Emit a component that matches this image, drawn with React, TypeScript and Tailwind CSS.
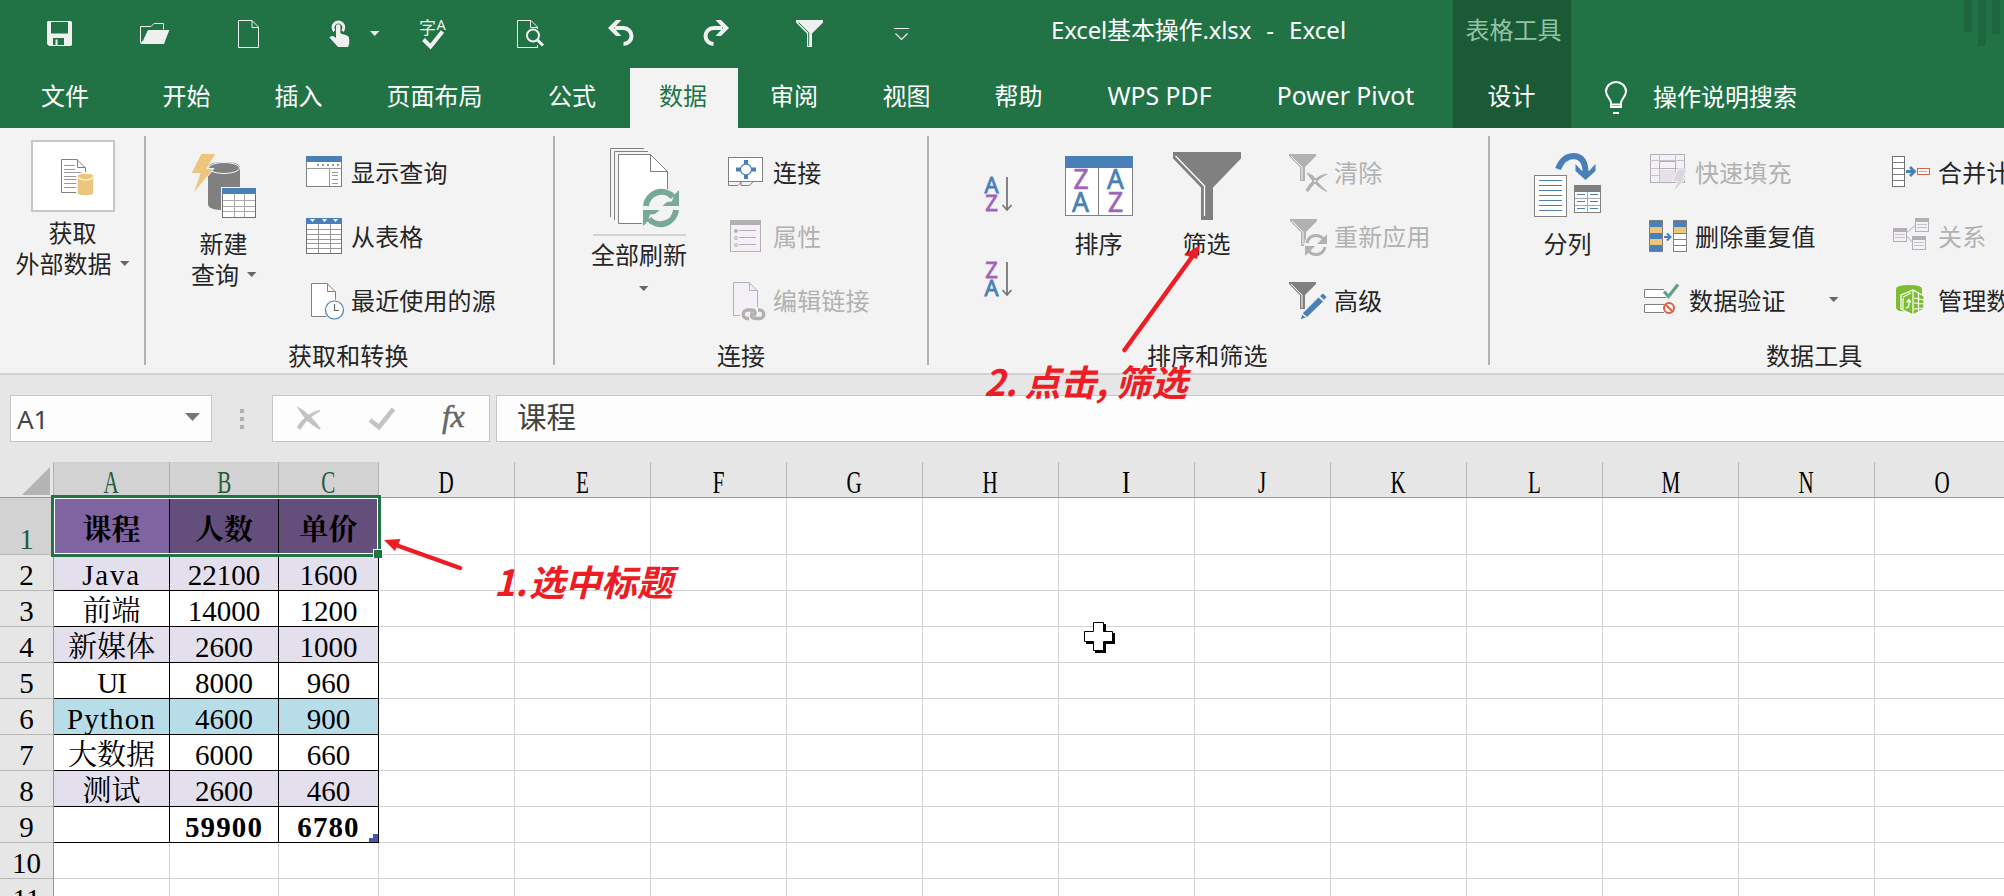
import type { ReactNode } from "react";

const G = "#808080";
const B = "#4a80b8";
const P = "#a064b8";
const DIM = "#b3b0b3";
const RED = "#ee1c25";

/* Icon whose viewBox is expressed in window coordinates. */
function Ic({ x, y, w, h, children }: { x: number; y: number; w: number; h: number; children: ReactNode }) {
  return (
    <svg width={w} height={h} viewBox={`${x} ${y} ${w} ${h}`} fill="none" className="block shrink-0 overflow-visible">
      {children}
    </svg>
  );
}

function Caret({ className = "" }: { className?: string }) {
  return (
    <svg width="10" height="5" viewBox="0 0 10 5" className={`block shrink-0 ${className}`}>
      <path d="M0 0H9.4L4.7 5Z" fill="#666" />
    </svg>
  );
}

/* ---------- title bar ---------- */

const quick: { x: number; w: number; art: ReactNode }[] = [
  {
    x: 0, w: 106,
    art: <path fillRule="evenodd" fill="#f0f0f0" d="M48 21H71L72 22V45L71 46H49L47 44V22ZM51 22V33.5H68V22ZM53 38V45H55.500V39.500H57.500V45H64V38Z" />,
  },
  {
    x: 106, w: 94,
    art: (
      <>
        <path d="M140.500 43V26.500H151L154 23.500H163.500V29.500" stroke="#f0f0f0" />
        <path d="M148 30H169.300L164 44H140.500Z" fill="#f0f0f0" />
        <path d="M142.500 41L147 30" stroke="#217346" />
      </>
    ),
  },
  {
    x: 200, w: 94,
    art: <path d="M238.500 20.500H252L258.500 27V47.500H238.500ZM252 20.500V27.500H258.500" stroke="#f0f0f0" />,
  },
  {
    x: 294, w: 106,
    art: (
      <>
        <path d="M334.500 32A5.300 5.300 0 1 1 342.300 32" stroke="#f0f0f0" strokeWidth="3" transform="translate(0 -1)" />
        <path d="M336 41V26.500a2.300 2.300 0 0 1 4.600 0V33.500L347 35.500Q349.500 36.500 349.200 39V44L348 47H338L329.500 37.500Q331 35 334 36.500L336 38Z" fill="#f0f0f0" />
        <path d="M335.500 37V26M341 33V26" stroke="#217346" strokeWidth=".8" />
        <path d="M370 31H379.500L374.700 36Z" fill="#f0f0f0" />
      </>
    ),
  },
  {
    x: 400, w: 80,
    art: (
      <>
        <text x="419" y="33.500" fontSize="17" fill="#f0f0f0" fontFamily="Noto Sans CJK SC, sans-serif">字</text>
        <text x="436.500" y="30" fontSize="14.500" fill="#f0f0f0" fontFamily="Noto Sans, sans-serif">A</text>
        <path d="M423.500 39.500L430.500 46.500L442.500 31.500" stroke="#f0f0f0" strokeWidth="4" />
      </>
    ),
  },
  {
    x: 480, w: 96,
    art: (
      <>
        <path d="M537.500 29V27L531 20.500H517.500V47.500H537.500V45M530.500 20.500V27.500H537.500" stroke="#f0f0f0" />
        <circle cx="533" cy="35.500" r="6" stroke="#f0f0f0" strokeWidth="2" fill="#217346" />
        <path d="M537.500 40L543 45.500" stroke="#f0f0f0" strokeWidth="3" />
      </>
    ),
  },
  {
    x: 576, w: 92,
    art: (
      <>
        <path d="M615 28H623.500A8 8 0 0 1 623.500 44" stroke="#f0f0f0" strokeWidth="4" />
        <path d="M608 28L616 20H621.500L614 28L621.500 36H616Z" fill="#f0f0f0" />
      </>
    ),
  },
  {
    x: 668, w: 95,
    art: (
      <>
        <path d="M722 28H713.500A8 8 0 0 0 713.500 44" stroke="#f0f0f0" strokeWidth="4" />
        <path d="M729 28L721 20H715.500L723 28L715.500 36H721Z" fill="#f0f0f0" />
      </>
    ),
  },
  {
    x: 763, w: 93,
    art: (
      <>
        <path d="M796 20H823V22.500L812 33.500V47H807V33.500L796 22.500Z" fill="#f0f0f0" />
        <path d="M798.500 22.500L808.700 32.500V46" stroke="#217346" />
      </>
    ),
  },
  {
    x: 856, w: 104,
    art: <path d="M894 28.500H909M895.500 33.500L901.500 39.500L907.500 33.500" stroke="#f0f0f0" strokeWidth="1.200" />,
  },
];

function Header() {
  const tab = "flex h-[60px] items-center justify-center pr-px pb-1 text-2xl text-white";
  return (
    <header className="flex h-32 bg-[#217346]">
      <div className="flex w-[1453px] shrink-0 flex-col">
        <div className="flex h-[68px]">
          {quick.map((q) => (
            <Ic key={q.x} x={q.x} y={0} w={q.w} h={68}>{q.art}</Ic>
          ))}
          <div className="ml-[91px] flex gap-[15px] pt-[14px] text-2xl leading-8 whitespace-pre text-white">
            <span className="tracking-[-0.15px]">Excel基本操作.xlsx</span>
            <span>-</span>
            <span className="tracking-[0.1px]">Excel</span>
          </div>
        </div>
        <nav className="flex">
          <div className={`${tab} w-[131px]`}>文件</div>
          <div className={`${tab} w-28`}>开始</div>
          <div className={`${tab} w-28`}>插入</div>
          <div className={`${tab} w-40`}>页面布局</div>
          <div className={`${tab} w-[115px]`}>公式</div>
          <div className="flex h-[60px] w-[108px] items-center justify-center bg-[#f3f3f3] pr-0.5 pb-1 text-2xl text-[#217346]">数据</div>
          <div className={`${tab} w-[113px]`}>审阅</div>
          <div className={`${tab} w-28`}>视图</div>
          <div className={`${tab} w-28`}>帮助</div>
          <div className={`${tab} w-[170px]`}><span className="text-[24.8px]">WPS PDF</span></div>
          <div className={`${tab} w-[202px]`}><span className="text-[24.8px]">Power Pivot</span></div>
        </nav>
      </div>
      <div className="flex w-[118px] shrink-0 flex-col items-center bg-[#1b5a37]">
        <div className="h-[68px] pt-[14px] pl-[3px] text-2xl leading-8 text-[#90c4a4]">表格工具</div>
        <div className={tab}>设计</div>
      </div>
      <div className="flex flex-1 flex-col overflow-hidden">
        <div className="flex h-[68px] justify-end gap-1.5 pr-1">
          <div className="h-8 w-2 bg-[#1f6640]" />
          <div className="h-[46px] w-2 bg-[#1f6640]" />
          <div className="h-[34px] w-2 bg-[#1f6640]" />
        </div>
        <div className="flex h-[60px] items-center text-2xl text-white">
          <Ic x={1571} y={68} w={82} h={60}>
            <path d="M1611 107V102.500C1611 99 1606 97 1606 91.500A10 9.500 0 0 1 1626 91.500C1626 97 1621 99 1621 102.500V107ZM1611 104.500H1621M1613 113H1619" stroke="#fff" strokeWidth="2" />
          </Ic>
          <span className="pb-0.5">操作说明搜索</span>
        </div>
      </div>
    </header>
  );
}

/* ---------- ribbon art ---------- */

const Funnel = ({ x, y, c, inner }: { x: number; y: number; c: string; inner: string }) => (
  <g transform={`translate(${x} ${y})`}>
    <path d="M0 0H27V2L16 13V27H11V13L0 2Z" fill={c} />
    <path d="M2 2L13 13V26" stroke={inner} />
  </g>
);

const grid = (x: number, y: number, w: number, h: number, cols: number, rows: number, c: string) => (
  <path
    stroke={c}
    d={
      Array.from({ length: cols - 1 }, (_, i) => `M${Math.round(x + ((i + 1) * w) / cols) + 0.5} ${y}v${h}`).join("") +
      Array.from({ length: rows - 1 }, (_, i) => `M${x} ${Math.round(y + ((i + 1) * h) / rows) + 0.5}h${w}`).join("")
    }
  />
);

const art = {
  external: (
    <>
      <path d="M61.500 159.500H77L85.500 168V192.500H61.500Z" fill="#fff" stroke={G} />
      <path d="M77.500 159.500V167.500H85.500" stroke={G} />
      <path d="M64 165.500H75M64 169.500H75M64 172.500H82M64 176.500H80M64 179.500H77M64 183.500H77M64 187.500H77" stroke="#999" />
      <path d="M77 176V193Q77 196 85.500 196T94 193V176Q94 173 85.500 173T77 176Z" fill="#edc57c" stroke="#fff" strokeWidth="1.500" />
      <path d="M78 177Q80 180 85.500 180T93 177" stroke="#fff" strokeWidth="1.200" />
    </>
  ),
  newQuery: (
    <>
      <path d="M208 168V204Q208 210 224 210T240 204V168Q240 162 224 162T208 168Z" fill={G} />
      <ellipse cx="224" cy="168" rx="15.500" ry="5.500" stroke="#f3f3f3" />
      <path d="M201 153.500H216L207 168.500H214L193 194L200 173.500H191Z" fill="#edc57c" stroke="#f3f3f3" />
      <rect x="221" y="187" width="36" height="32" fill="#f3f3f3" />
      <rect x="222.500" y="188.500" width="33" height="29" fill="#fff" stroke="#707070" />
      <path d="M222 188H256V194H222Z" fill={B} />
      {grid(223, 194, 32, 23, 3, 4, "#a8a8a8")}
    </>
  ),
  showQuery: (
    <>
      <rect x="306.500" y="156.500" width="35" height="30" fill="#fff" stroke={G} />
      <path d="M306 156H342V162H306Z" fill={B} />
      <path d="M307 168.500H341M329.500 169V186M332 172.500H338M332 175.500H338M332 179.500H338M332 183.500H338" stroke="#999" />
      <path d="M317 165H340" stroke="#999" strokeWidth="2" strokeDasharray="2 3" />
    </>
  ),
  fromTable: (
    <>
      <rect x="306.500" y="218.500" width="35" height="35" fill="#fff" stroke="#707070" />
      <path d="M306 218H342V224H306Z" fill={B} />
      <path d="M310 219H315L312.500 222ZM322 219H327L324.500 222ZM333 219H338L335.500 222Z" fill="#fff" />
      {grid(307, 224, 34, 29, 3, 6, "#999")}
    </>
  ),
  recent: (
    <>
      <path d="M311.500 283.500H327L335.500 292V316.500H311.500Z" fill="#fff" stroke={G} />
      <path d="M327.500 283.500V291.500H335.500" stroke={G} />
      <circle cx="334.500" cy="310" r="10.500" fill="#f3f3f3" />
      <circle cx="334.500" cy="310" r="9" fill="#fff" stroke={B} strokeWidth="1.200" />
      <path d="M334.500 304V310.500H339" stroke="#666" strokeWidth="1.200" />
    </>
  ),
  refresh: (
    <>
      <path d="M610.500 217V148.500H644M614.500 220V151.500H648" stroke={G} />
      <path d="M618.500 154.500H650.500L667.500 171.500V223.500H618.500Z" fill="#fff" stroke={G} />
      <path d="M650.500 154.500V171.500H667.500" stroke={G} />
      <path d="M642 226V206Q646 189 661 189H669V226Z" fill="#f3f3f3" />
      <path d="M646 206A15.500 15.500 0 0 1 673 197M676 210A15.500 15.500 0 0 1 649 219" stroke="#78a898" strokeWidth="6" />
      <path d="M679 190V206H662.500L667 202L672 201.500L674 195ZM643 226V210H659.500L655 214L650 214.500L648 221Z" fill="#78a898" />
    </>
  ),
  connection: (
    <>
      <rect x="728.500" y="157.500" width="34" height="24" fill="#fff" stroke={G} />
      <path d="M728.500 182V185.500H738L741.500 182M741 182V185.500H749L753 182" stroke={G} />
      <circle cx="746" cy="169.500" r="5.500" stroke={B} strokeWidth="1.300" />
      <path d="M744 160h4v4h-4zM744 175h4v4h-4zM736 167.500h4v4h-4zM752 167.500h4v4h-4z" fill={B} />
    </>
  ),
  props: (
    <>
      <rect x="730.500" y="220.500" width="30" height="31" fill="#f5f0f7" stroke={DIM} />
      <path d="M730 220H761V225H730Z" fill={DIM} />
      <circle cx="736" cy="231" r="2" fill={DIM} />
      <circle cx="736" cy="238" r="1.500" stroke={DIM} />
      <circle cx="736" cy="245" r="1.500" stroke={DIM} />
      <path d="M739 230.500H756M739 237.500H756M739 244.500H756" stroke={DIM} />
    </>
  ),
  editLink: (
    <>
      <path d="M733.500 282.500H749L757.500 291V315.500H733.500Z" fill="#f5f0f7" stroke={DIM} />
      <path d="M749.500 282.500V290.500H757.500" stroke={DIM} />
      <path d="M740 307H767V320H740Z" fill="#f3f3f3" />
      <path d="M754 316Q757 310 751 310H747.500A4.200 4.200 0 0 0 747.500 318.500H749M752.500 312.500Q749.500 318.500 756 318.500H759.500A4.200 4.200 0 0 0 759.500 310H758" stroke={DIM} strokeWidth="3.400" />
    </>
  ),
  sortIcon: (
    <>
      <rect x="1065.500" y="156.500" width="67" height="59" fill="#fff" stroke={G} />
      <path d="M1065 156H1133V168H1065Z" fill={B} />
      <path d="M1098.500 168V215" stroke={G} />
      <g fontSize="26.500" fontFamily="Noto Sans, sans-serif" textAnchor="middle" strokeWidth=".7">
        <text x="1081" y="189" fill={P} stroke={P}>Z</text>
        <text x="1115.500" y="189" fill={B} stroke={B}>A</text>
        <text x="1080.500" y="212" fill={B} stroke={B}>A</text>
        <text x="1115.500" y="212" fill={P} stroke={P}>Z</text>
      </g>
    </>
  ),
  filter: (
    <>
      <path d="M1173 152H1241V158.500L1213 187.500V220H1201V187.500L1173 158.500Z" fill={G} />
      <path d="M1175.500 156L1204.500 186V216" stroke="#fff" strokeWidth="1.300" />
    </>
  ),
  clear: (
    <>
      <Funnel x={1289} y={154} c={DIM} inner="#f5f0f7" />
      <path d="M1307 173L1313 176Q1318 184 1327 191.500Q1316 187 1307 173ZM1327 174Q1314 176 1306 190L1308 191.500Q1315 180 1327 174Z" fill={DIM} stroke={DIM} />
    </>
  ),
  reapply: (
    <>
      <Funnel x={1290} y={219} c={DIM} inner="#f5f0f7" />
      <path d="M1304 246Q1305 233 1316 233V246Z" fill="#f3f3f3" />
      <path d="M1307 243A9.300 9.300 0 0 1 1323 238.500M1325 247A9.300 9.300 0 0 1 1309 251.500" stroke={DIM} strokeWidth="3" />
      <path d="M1327 234V244H1317ZM1305 256V246H1315Z" fill={DIM} />
    </>
  ),
  advanced: (
    <>
      <Funnel x={1289} y={282} c={G} inner="#fff" />
      <path d="M1300 320L1302.500 313L1318.500 297L1323.500 301.500L1307 317.500Z" fill={B} stroke="#f3f3f3" />
      <path d="M1320 296L1323 293.500L1326.500 297L1324 300Z" fill={B} />
      <path d="M1302 313.500L1306.500 317.500" stroke="#f3f3f3" strokeWidth="1.500" />
    </>
  ),
  split: (
    <>
      <path d="M1558 169Q1563 156 1574 156Q1586 157 1585.500 174" stroke={B} strokeWidth="6" />
      <path d="M1575.500 164L1582 171H1589L1595.500 164V171L1585.500 180L1575.500 171Z" fill={B} />
      <rect x="1534.500" y="175.500" width="32" height="41" fill="#fff" stroke={G} />
      <path d="M1539 180.500H1562M1539 185.500H1562M1539 190.500H1562M1539 195.500H1562M1539 200.500H1562M1539 205.500H1562M1539 210.500H1562" stroke={B} />
      <rect x="1574.500" y="185.500" width="26" height="27" fill="#fff" stroke={G} />
      <path d="M1574 185H1601V192H1574Z" fill={G} />
      <path d="M1575 198.500H1600M1575 205.500H1600M1587.500 192V212" stroke="#aaa" />
      <path d="M1577 194.500H1585M1590 194.500H1598M1577 201.500H1585M1590 201.500H1598M1577 208.500H1585M1590 208.500H1598" stroke={B} />
    </>
  ),
  flash: (
    <>
      <rect x="1650.500" y="154.500" width="34" height="28" fill="#f5f0f7" stroke={DIM} />
      <path d="M1659.500 154V182M1675.500 154V182M1650 160.500H1684M1650 168.500H1684M1650 175.500H1684" stroke="#c6c2c8" />
      <rect x="1660" y="170" width="15" height="12" fill="#e6e0e8" />
      <rect x="1659.500" y="161.500" width="16" height="7" fill="#f5f0f7" stroke={DIM} />
      <path d="M1678 169H1687L1683 178H1686L1673.500 192L1677 181.500H1672Z" fill="#dcd6de" stroke="#f3f3f3" />
    </>
  ),
  dedupe: (
    <>
      <rect x="1649.500" y="220.500" width="13" height="31" fill={B} stroke={G} />
      <path d="M1650 227h12v6h-12zM1650 239h12v6h-12z" fill="#edc57c" />
      <rect x="1673.500" y="220.500" width="13" height="31" fill="#fff" stroke={G} />
      <path d="M1674 221h12v6h-12z" fill={B} />
      <path d="M1674 227h12v6h-12z" fill="#edc57c" />
      <path d="M1674 233.500h12M1674 239.500h12M1674 245.500h12" stroke={G} />
      <path d="M1664 237H1670M1667 233.500L1670.500 237L1667 240.500" stroke={B} strokeWidth="2" />
    </>
  ),
  validate: (
    <>
      <path d="M1664 289.500H1644.500V297.500H1666" fill="#fff" stroke={G} />
      <path d="M1664 304.500H1644.500V312.500H1664" fill="#fff" stroke={G} />
      <path d="M1664 291.500L1668.500 296.500L1678 284.500" stroke="#64a08c" strokeWidth="3.300" />
      <circle cx="1669" cy="308" r="5" fill="#f3f3f3" stroke="#d8624a" strokeWidth="2" />
      <path d="M1665.500 304.500L1672.500 311.500" stroke="#d8624a" strokeWidth="2" />
    </>
  ),
  consolidate: (
    <>
      <rect x="1892.500" y="156.500" width="12" height="30" fill="#fff" stroke="#707070" />
      <path d="M1893 162.500h11M1893 168.500h11M1893 174.500h11M1893 180.500h11" stroke={G} />
      <path d="M1906 171.500H1913M1910 167L1914.500 171.500L1910 176" stroke={B} strokeWidth="2.800" />
      <rect x="1917.500" y="168.500" width="12" height="6" fill="#fff" stroke="#d8624a" />
      <path d="M1919 171.500h8" stroke="#aaa" />
    </>
  ),
  relation: (
    <>
      <path d="M1906 233L1916 225M1906 235L1913 243" stroke={DIM} />
      {[[1893, 228], [1915, 218], [1912, 236]].map(([x, y]) => (
        <g key={x}>
          <rect x={x + 0.5} y={y + 0.5} width="13" height="13" fill="#f5f0f7" stroke={DIM} />
          <path d={`M${x} ${y}h14v4h-14z`} fill={DIM} />
          <path d={`M${x + 2} ${y + 6.5}h10M${x + 2} ${y + 9.5}h10`} stroke="#c6c2c8" />
        </g>
      ))}
    </>
  ),
  model: (
    <>
      <path d="M1896 289Q1896 285 1909 285T1922 289V304L1914 312L1900 311Q1896 310 1896 307Z" fill="#7ebc33" />
      <path d="M1901 295L1913 290L1924 296V309L1913 315L1901 309Z" fill="#7ebc33" stroke="#fff" strokeWidth="1.200" />
      <path d="M1913 290V315M1903 298V309M1903 297L1911 293M1914 298L1924 300M1914 303L1924 304M1914 309L1924 308M1918.500 293V312" stroke="#fff" strokeWidth="1.200" />
      <path d="M1905.500 308Q1909 308 1909 304V300M1906.500 302.500L1909 299.500L1911 302.500" stroke="#fff" strokeWidth="1.200" />
    </>
  ),
};

/* ---------- ribbon ---------- */

function Row({ x, n, w, label, dim, children }: { x: number; n: number; w: number; label: string; dim?: boolean; children: ReactNode }) {
  return (
    <div className="flex h-16 items-center whitespace-nowrap">
      <Ic x={x} y={141 + n * 64} w={w} h={64}>{children}</Ic>
      <span className={dim ? "pb-px tracking-[0.15px] text-[#b1b1b1]" : "pb-px tracking-[0.15px] text-[#262626]"}>{label}</span>
    </div>
  );
}

function Label({ children, className }: { children: string; className: string }) {
  return <div className={`flex h-9 items-center pt-px tracking-[0.1px] ${className}`}>{children}</div>;
}

const group = "flex h-[245px] shrink-0 flex-col";
const Sep = () => <div className="mt-2 h-[229px] w-0.5 shrink-0 bg-[#b1b1b1]" />;

function SortLetters({ y, first, second }: { y: number; first: string; second: string }) {
  return (
    <Ic x={980} y={y} w={40} h={85}>
      <g fontSize="22" fontFamily="Noto Sans, sans-serif" textAnchor="middle" strokeWidth=".8">
        <text x="991.500" y={y + 52} fill={first === "A" ? B : P} stroke={first === "A" ? B : P}>{first}</text>
        <text x="991.500" y={y + 70} fill={first === "A" ? P : B} stroke={first === "A" ? P : B}>{second}</text>
      </g>
      <path d={`M1007 ${y + 36}V${y + 69}M1002.500 ${y + 64}L1007 ${y + 69}L1011.500 ${y + 64}`} stroke="#777" strokeWidth="1.800" />
    </Ic>
  );
}

function Ribbon() {
  return (
    <section className="flex h-[247px] overflow-hidden border-b-2 border-[#d2d2d2] bg-[#f3f3f3] text-2xl text-[#262626]">
      <div className={`${group} w-36 items-center pt-3`}>
        <div className="ml-0.5 flex h-[72px] w-[84px] items-center justify-center border-2 border-[#c6c6c6] bg-white">
          <Ic x={33} y={142} w={80} h={68}>{art.external}</Ic>
        </div>
        <div className="mt-[5px] pl-px leading-[31px]">获取</div>
        <div className="flex items-center gap-2 pr-0 pl-[1px] leading-[31px] whitespace-nowrap">外部数据<Caret /></div>
      </div>
      <Sep />
      <div className={`${group} w-[407px]`}>
        <div className="flex h-[209px]">
          <div className="flex w-[156px] flex-col items-center">
            <Ic x={146} y={128} w={156} h={100}>{art.newQuery}</Ic>
            <div className="pr-px leading-[31px]">新建</div>
            <div className="flex items-center gap-2 leading-[31px]">查询<Caret /></div>
          </div>
          <div className="pt-[13px]">
            <Row x={302} n={0} w={49} label="显示查询">{art.showQuery}</Row>
            <Row x={302} n={1} w={49} label="从表格">{art.fromTable}</Row>
            <Row x={302} n={2} w={49} label="最近使用的源">{art.recent}</Row>
          </div>
        </div>
        <Label className="pl-[142px]">获取和转换</Label>
      </div>
      <Sep />
      <div className={`${group} w-[372px]`}>
        <div className="flex h-[209px]">
          <div className="flex w-[169px] flex-col items-center">
            <Ic x={555} y={128} w={169} h={106}>{art.refresh}</Ic>
            <div className="h-0.5 w-[93px] bg-[#d2d2d2]" />
            <div className="mt-[3px] pr-px leading-[31px]">全部刷新</div>
            <Caret className="mt-4 ml-2" />
          </div>
          <div className="pt-[13px]">
            <Row x={724} n={0} w={49} label="连接">{art.connection}</Row>
            <Row x={724} n={1} w={49} label="属性" dim>{art.props}</Row>
            <Row x={724} n={2} w={49} label="编辑链接" dim>{art.editLink}</Row>
          </div>
        </div>
        <Label className="pl-[162px]">连接</Label>
      </div>
      <Sep />
      <div className={`${group} w-[559px]`}>
        <div className="flex h-[209px]">
          <div className="flex w-[116px] flex-col pt-[13px] pl-[51px]">
            <SortLetters y={141} first="A" second="Z" />
            <SortLetters y={226} first="Z" second="A" />
          </div>
          <div className="flex w-[108px] flex-col items-center">
            <Ic x={1045} y={128} w={108} h={100}>{art.sortIcon}</Ic>
            <div className="pr-px leading-[31px]">排序</div>
          </div>
          <div className="flex w-[108px] flex-col items-center">
            <Ic x={1153} y={128} w={108} h={100}>{art.filter}</Ic>
            <div className="pr-px leading-[31px]">筛选</div>
          </div>
          <div className="pt-[13px] pl-6">
            <Row x={1285} n={0} w={49} label="清除" dim>{art.clear}</Row>
            <Row x={1285} n={1} w={49} label="重新应用" dim>{art.reapply}</Row>
            <Row x={1285} n={2} w={49} label="高级">{art.advanced}</Row>
          </div>
        </div>
        <Label className="pl-[218px]">排序和筛选</Label>
      </div>
      <Sep />
      <div className={`${group} w-[620px]`}>
        <div className="flex h-[209px]">
          <div className="flex w-[154px] flex-col items-center">
            <Ic x={1490} y={128} w={154} h={100}>{art.split}</Ic>
            <div className="pl-px leading-[31px]">分列</div>
          </div>
          <div className="w-[244px] pt-[13px]">
            <Row x={1644} n={0} w={51} label="快速填充" dim>{art.flash}</Row>
            <Row x={1644} n={1} w={51} label="删除重复值">{art.dedupe}</Row>
            <div className="flex items-center">
              <Row x={1644} n={2} w={45} label="数据验证">{art.validate}</Row>
              <Caret className="mb-[3px] ml-[43px]" />
            </div>
          </div>
          <div className="pt-[13px]">
            <Row x={1888} n={0} w={50} label="合并计算">{art.consolidate}</Row>
            <Row x={1888} n={1} w={50} label="关系" dim>{art.relation}</Row>
            <Row x={1888} n={2} w={50} label="管理数据模型">{art.model}</Row>
          </div>
        </div>
        <Label className="pl-[276px]">数据工具</Label>
      </div>
    </section>
  );
}

/* ---------- formula bar ---------- */

function FormulaBar() {
  return (
    <section className="flex h-[87px] bg-[#e6e6e6] pt-5 pl-2.5">
      <div className="flex h-[47px] w-[202px] items-center justify-between border border-[#c6c6c6] bg-[#fdfdfd] pr-[11px] pl-1.5 text-2xl text-[#444]">
        <span className="text-[26px] leading-8">A1</span>
        <svg width="15" height="8" viewBox="0 0 15 8" className="-mt-1"><path d="M0 0H15L7.500 8Z" fill="#777" /></svg>
      </div>
      <div className="flex h-[47px] w-[60px] flex-col items-center justify-center gap-1">
        <div className="size-1 bg-[#b1b1b1]" />
        <div className="size-1 bg-[#b1b1b1]" />
        <div className="size-1 bg-[#b1b1b1]" />
      </div>
      <div className="flex h-[47px] w-[218px] border border-[#c6c6c6] bg-[#fdfdfd]">
        <Ic x={273} y={396} w={216} h={45}>
          <path d="M299 408.500Q309 414 320 429Q306 421 299 408.500ZM298 427Q306 414 320 410.500Q308 416 300 428.500Z" fill="#c3c3c3" stroke="#c3c3c3" strokeWidth="1.800" />
          <path d="M370 420L379 427L393.500 409" stroke="#c3c3c3" strokeWidth="4.500" />
          <text x="442" y="427" fontSize="32" letterSpacing="-0.500" fontStyle="italic" fill="#666" stroke="#666" strokeWidth=".5" fontFamily="Liberation Serif, serif">fx</text>
        </Ic>
      </div>
      <div className="ml-1.5 flex h-[47px] flex-1 items-center border border-r-0 border-[#c6c6c6] bg-[#fdfdfd] pb-0.5 pl-5 text-[29.500px] text-[#444]">课程</div>
    </section>
  );
}

/* ---------- sheet ---------- */

const cols = "grid grid-cols-[54px_116px_109px_100px_repeat(12,136px)]";
const letters = "ABCDEFGHIJKLMNO".split("");

type Line = { cells: [string, string, string]; bg: string };
const lines: Line[] = [
  { cells: ["Java", "22100", "1600"], bg: "bg-[#e4dfec]" },
  { cells: ["前端", "14000", "1200"], bg: "bg-white" },
  { cells: ["新媒体", "2600", "1000"], bg: "bg-[#e4dfec]" },
  { cells: ["UI", "8000", "960"], bg: "bg-white" },
  { cells: ["Python", "4600", "900"], bg: "bg-[#b7dee8]" },
  { cells: ["大数据", "6000", "660"], bg: "bg-white" },
  { cells: ["测试", "2600", "460"], bg: "bg-[#e4dfec]" },
  { cells: ["", "59900", "6780"], bg: "bg-white font-bold" },
];

const spacing: Record<string, string> = {
  Java: "tracking-[1.8px]",
  UI: "tracking-[-1px]",
  Python: "tracking-[1.1px]",
  "59900": "tracking-[1.1px]",
  "6780": "tracking-[1.1px]",
};

function Blank({ from = 0 }: { from?: number }) {
  return (
    <>
      {letters.slice(from).map((l) => (
        <div key={l} className="border-r border-b border-[#d2d2d2]" />
      ))}
    </>
  );
}

function RowHead({ n, className = "" }: { n: number; className?: string }) {
  return (
    <div className={`flex items-center justify-center border-r border-b border-r-[#999] border-b-[#b8b8b8] pt-1.5 ${className}`}>
      {n}
    </div>
  );
}

function Sheet() {
  return (
    <section className="h-[434px] w-[2004px] overflow-hidden bg-white font-['Liberation_Serif','Noto_Serif_CJK_SC','Noto_Sans_CJK_SC',serif] text-[29px] leading-none text-black">
      <div className={`${cols} h-9 w-max bg-[#e6e6e6]`}>
        <div className="flex items-end justify-end border-r border-b border-r-[#b1b1b1] border-b-[#999] pr-[3px] pb-0.5">
          <svg width="28" height="28" viewBox="0 0 28 28"><path d="M28 0V28H0Z" fill="#b4b4b4" /></svg>
        </div>
        {letters.map((l, i) => (
          <div
            key={l}
            className={
              i < 3
                ? "flex h-9 items-center justify-center border-r border-b border-r-[#b1b1b1] border-b-[#999] bg-[#d2d2d2] pt-1 text-[#1e5c3c]"
                : "flex h-9 items-center justify-center border-r border-b border-b-[#999] pt-1 [border-right-color:#b8b8b8]"
            }
          >
            <span className={l === "I" ? "translate-y-px scale-x-[0.8] text-[31px]" : "translate-y-px scale-x-[0.68] text-[31px]"}>{l}</span>
          </div>
        ))}
      </div>
      <div className={`${cols} h-[57px] w-max`}>
        <div className="flex items-end justify-center border-r border-b border-r-[#999] border-b-[#b8b8b8] bg-[#d2d2d2] text-[#1e5c3c]">1</div>
        <div className="flex items-center justify-center border-r border-b border-black bg-[#8064a2] pt-2 font-bold">课程</div>
        <div className="flex items-center justify-center border-r border-b border-black bg-[#644f7c] pt-2 font-bold">人数</div>
        <div className="flex items-center justify-center border-r border-b border-black bg-[#644f7c] pt-2 font-bold">单价</div>
        <Blank from={3} />
      </div>
      {lines.map((line, i) => (
        <div key={i} className={`${cols} h-9 w-max`}>
          <RowHead n={i + 2} className="bg-[#e6e6e6]" />
          {line.cells.map((c, j) => (
            <div key={j} className={`relative flex items-center justify-center border-r border-b border-black pt-1.5 ${line.bg}`}>
              <span className={spacing[c] ?? ""}>{c}</span>
              {i === 7 && j === 2 && (
                <svg width="9" height="8" className="absolute right-0 bottom-0"><path d="M4 0H9V8H0V4H4Z" fill="#4459b0" /></svg>
              )}
            </div>
          ))}
          <Blank from={3} />
        </div>
      ))}
      <div className={`${cols} h-9 w-max`}>
        <RowHead n={10} className="bg-[#e6e6e6]" />
        <Blank />
      </div>
      <div className={`${cols} h-9 w-max`}>
        <RowHead n={11} className="bg-[#e6e6e6]" />
        <Blank />
      </div>
    </section>
  );
}

/* ---------- overlays ---------- */

function Overlays() {
  const note = "absolute whitespace-pre font-['Noto_Sans_CJK_SC',sans-serif] text-4xl leading-none font-bold italic text-[#ee1c25]";
  return (
    <>
      <div className="absolute top-[495px] left-[51px] h-[62px] w-[330px] border-[3px] border-[#217346]">
        <div className="h-full w-full border border-white" />
      </div>
      <div className="absolute top-[549px] left-[373px] size-[9px] border-t border-l border-white bg-[#217346]" />
      <svg width="2004" height="896" viewBox="0 0 2004 896" fill="none" className="pointer-events-none absolute top-0 left-0">
        <path d="M460 568L393 544M1124.500 350L1192 257" stroke={RED} strokeWidth="4.500" strokeLinecap="round" />
        <path d="M384 540L400.500 539L395 551ZM1200 245L1184 255L1197 259Z" fill={RED} />
        <path d="M1095 624H1106V633H1115V644H1106V653H1095V644H1086V633H1095Z" fill="#000" />
        <path d="M1093.500 622.500H1103.500V631.500H1112.500V641.500H1103.500V650.500H1093.500V641.500H1084.500V631.500H1093.500Z" fill="#fff" stroke="#000" />
      </svg>
      <div className={`${note} top-[362px] left-[984px] tracking-[-0.2px]`}>2. 点击, 筛选</div>
      <div className={`${note} top-[562px] left-[494px] [word-spacing:-6px]`}>1. 选中标题</div>
    </>
  );
}

export default function App() {
  return (
    <main className="relative h-[896px] w-[2004px] overflow-hidden bg-white font-['Noto_Sans','Noto_Sans_CJK_SC',sans-serif]">
      <Header />
      <Ribbon />
      <FormulaBar />
      <Sheet />
      <Overlays />
    </main>
  );
}
